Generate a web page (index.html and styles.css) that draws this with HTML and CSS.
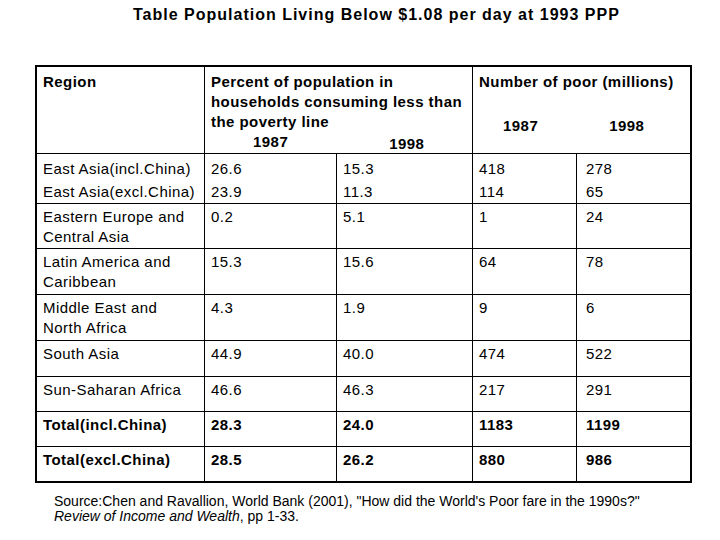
FILE: index.html
```html
<!DOCTYPE html>
<html>
<head>
<meta charset="utf-8">
<link rel="stylesheet" href="styles.css">
</head>
<body>
<h1 class="title">Table Population Living Below $1.08 per day at 1993 PPP</h1>
<div class="grid">
  <div class="cell head">Region</div>
  <div class="cell head span2">
    <div>Percent of population in<br>households consuming less than<br>the poverty line</div>
    <div class="years years-pct"><span class="y1">1987</span><span class="y2">1998</span></div>
  </div>
  <div class="cell head span2 last">
    <div>Number of poor (millions)</div>
    <div class="years years-num"><span class="y1">1987</span><span class="y2">1998</span></div>
  </div>

  <div class="cell tall">East Asia(incl.China)<br>East Asia(excl.China)</div>
  <div class="cell tall">26.6<br>23.9</div>
  <div class="cell tall">15.3<br>11.3</div>
  <div class="cell tall">418<br>114</div>
  <div class="cell tall last c5">278<br>65</div>

  <div class="cell">Eastern Europe and<br>Central Asia</div>
  <div class="cell">0.2</div>
  <div class="cell">5.1</div>
  <div class="cell">1</div>
  <div class="cell last c5">24</div>

  <div class="cell">Latin America and<br>Caribbean</div>
  <div class="cell">15.3</div>
  <div class="cell">15.6</div>
  <div class="cell">64</div>
  <div class="cell last c5">78</div>

  <div class="cell">Middle East and<br>North Africa</div>
  <div class="cell">4.3</div>
  <div class="cell">1.9</div>
  <div class="cell">9</div>
  <div class="cell last c5">6</div>

  <div class="cell">South Asia</div>
  <div class="cell">44.9</div>
  <div class="cell">40.0</div>
  <div class="cell">474</div>
  <div class="cell last c5">522</div>

  <div class="cell">Sun-Saharan Africa</div>
  <div class="cell">46.6</div>
  <div class="cell">46.3</div>
  <div class="cell">217</div>
  <div class="cell last c5">291</div>

  <div class="cell bold">Total(incl.China)</div>
  <div class="cell bold">28.3</div>
  <div class="cell bold">24.0</div>
  <div class="cell bold">1183</div>
  <div class="cell bold last c5">1199</div>

  <div class="cell bold bottom">Total(excl.China)</div>
  <div class="cell bold bottom">28.5</div>
  <div class="cell bold bottom">26.2</div>
  <div class="cell bold bottom">880</div>
  <div class="cell bold bottom last c5">986</div>
</div>
<p class="source">Source:Chen and Ravallion, World Bank (2001), "How did the World's Poor fare in the 1990s?"<br><em>Review of Income and Wealth</em>, pp 1-33.</p>
</body>
</html>
```

FILE: styles.css
```css
html, body {
  margin: 0;
  padding: 0;
  background: #ffffff;
  color: #000000;
  font-family: "Liberation Sans", Arial, sans-serif;
}

.title {
  margin: 5px 0 0 133px;
  font-size: 16px;
  line-height: 20px;
  font-weight: bold;
  letter-spacing: 1px;
  white-space: nowrap;
}

.grid {
  display: grid;
  width: max-content;
  margin: 40px 0 0 35px;
  border: 2px solid #000;
  grid-template-columns: 168px 132px 136px 104px 113px;
  grid-template-rows: 87px 50px 45px 46px 46px 36px 35px 35px 34px;
  font-size: 15px;
  letter-spacing: 0.45px;
}

.cell {
  box-sizing: border-box;
  border-right: 1px solid #000;
  border-bottom: 1px solid #000;
  padding: 3px 4px 0 6px;
  line-height: 20px;
  white-space: nowrap;
}

.cell.last {
  border-right: none;
}

.cell.bottom {
  border-bottom: none;
}

.cell.c5 {
  padding-left: 9px;
}

.cell.tall {
  line-height: 23px;
}

.head {
  font-weight: bold;
  padding-top: 5px;
}

.span2 {
  grid-column: span 2;
}

.bold {
  font-weight: bold;
}

.years {
  display: flex;
  align-items: flex-start;
}

.years-pct .y1 {
  margin-left: 42px;
  margin-top: 0;
}

.years-pct .y2 {
  margin-left: 101px;
  margin-top: 2px;
}

.years-num {
  margin-top: 24px;
}

.years-num .y1 {
  margin-left: 24px;
}

.years-num .y2 {
  margin-left: 71px;
}

.source {
  margin: 11px 0 0 54px;
  font-size: 14px;
  line-height: 15px;
  white-space: nowrap;
}

.source em {
  font-style: italic;
}
```
